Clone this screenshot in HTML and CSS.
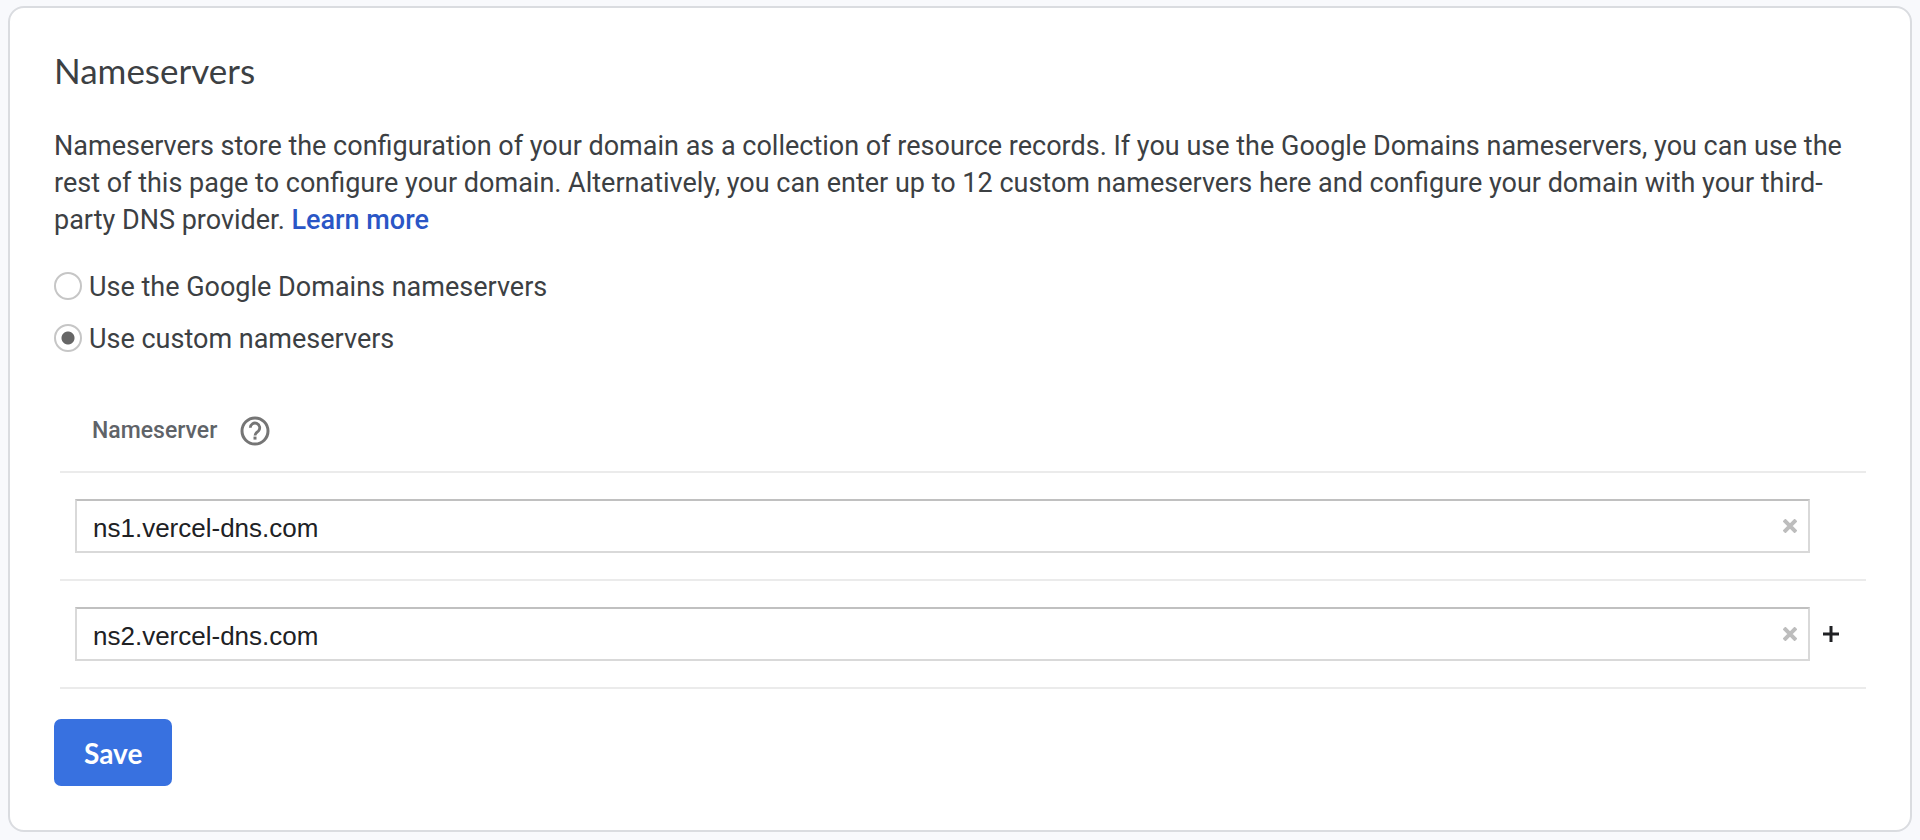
FILE: index.html
```
<!DOCTYPE html>
<html lang="en">
<head>
    <meta charset="UTF-8">
    <meta name="viewport" content="width=device-width, initial-scale=1.0">
    <title>Nameservers</title>
    <link rel="stylesheet" href="styles.css">
</head>
<body>
    <form class="card">
        <h1>Nameservers</h1>

        <p class="description">
            Nameservers store the configuration of your domain as a collection of resource records. If you use the Google Domains nameservers, you can use the rest of this page to configure your domain. Alternatively, you can enter up to 12 custom nameservers here and configure your domain with your third-party DNS provider. <a href="#">Learn more</a>
        </p>

        <div class="options">
            <label class="option">
                <input type="radio" name="mode" value="google">
                Use the Google Domains nameservers
            </label>
            <label class="option">
                <input type="radio" name="mode" value="custom" checked>
                Use custom nameservers
            </label>
        </div>

        <table class="servers">
            <thead>
                <tr>
                    <th colspan="2">
                        <div class="heading">
                            <span id="nsLabel">Nameserver</span>
                            <button type="button" class="icon-btn" aria-label="Help">
                                <svg width="30" height="30" viewBox="0 0 30 30" fill="none" stroke="#757575">
                                    <circle cx="15" cy="15" r="13" stroke-width="3"/>
                                    <path d="M10.3 11.8a4.7 4.7 0 1 1 8.1 3.2c-1.8 1.7-3.4 2.3-3.4 4.4" stroke-width="2.8"/>
                                    <path d="M15 20.6v3" stroke-width="3"/>
                                </svg>
                            </button>
                        </div>
                    </th>
                </tr>
            </thead>
            <tbody>
                <tr>
                    <td>
                        <div class="field">
                            <input type="text" value="ns1.vercel-dns.com" aria-labelledby="nsLabel">
                            <button type="button" class="icon-btn clear" aria-label="Clear">
                                <svg width="14" height="14" viewBox="0 0 14 14" stroke="#bdbdbd" stroke-width="4">
                                    <path d="M1 1l12 12M13 1L1 13"/>
                                </svg>
                            </button>
                        </div>
                    </td>
                    <td class="action"></td>
                </tr>
                <tr>
                    <td>
                        <div class="field">
                            <input type="text" value="ns2.vercel-dns.com" aria-labelledby="nsLabel">
                            <button type="button" class="icon-btn clear" aria-label="Clear">
                                <svg width="14" height="14" viewBox="0 0 14 14" stroke="#bdbdbd" stroke-width="4">
                                    <path d="M1 1l12 12M13 1L1 13"/>
                                </svg>
                            </button>
                        </div>
                    </td>
                    <td class="action">
                        <button type="button" class="icon-btn" aria-label="Add nameserver">
                            <svg width="16" height="16" viewBox="0 0 16 16" stroke="#202124" stroke-width="3">
                                <path d="M8 0v16M0 8h16"/>
                            </svg>
                        </button>
                    </td>
                </tr>
            </tbody>
        </table>

        <button type="submit" class="btn">Save</button>
    </form>
</body>
</html>
```

FILE: styles.css
```
body {
    font-family: Roboto, sans-serif;
    font-size: 27px;
    line-height: 37px;
    color: #3c4043;
    margin: 0;
    padding: 6px 8px;
    background-color: #f8f9fc;
}

.card {
    background: white;
    padding: 40px 44px 44px;
    border: 2px solid #dadce0;
    border-radius: 16px;
}

h1 {
    font-family: Lato, sans-serif;
    font-weight: normal;
    font-size: 35px;
    line-height: 44px;
    margin: 0 0 36px;
}

.description {
    margin: 0 0 30px;
}

a {
    color: #2a56c6;
    font-weight: 500;
    text-decoration: none;
}

.options {
    display: grid;
    gap: 15px;
}

.option {
    display: flex;
    align-items: center;
    gap: 7px;
}

.option input {
    appearance: none;
    width: 28px;
    height: 28px;
    margin: 0 0 4px;
    border: 2px solid #c6c6c6;
    border-radius: 50%;
    background: white;
}

.option input:checked {
    background: radial-gradient(circle, #666 6px, white 7px);
}

.servers {
    width: calc(100% - 6px);
    margin: 32px 0 30px 6px;
    border-collapse: collapse;
}

.servers tr {
    border-bottom: 2px solid #ebebeb;
}

.servers th {
    padding: 22px 32px;
    color: #5f6368;
    font-size: 23px;
    font-weight: 500;
}

.servers td {
    padding: 26px 0 26px 15px;
}

.servers .action {
    width: 43px;
    padding: 0 0 0 13px;
}

.heading {
    display: flex;
    align-items: center;
    gap: 23px;
}

.icon-btn {
    display: flex;
    padding: 0;
    border: none;
    background: none;
    cursor: pointer;
}

.field {
    display: flex;
    align-items: center;
    border: 2px solid #d9d9d9;
    border-top-color: #c0c0c0;
}

.field input {
    flex: 1;
    height: 50px;
    padding: 4px 16px 0;
    border: none;
    outline: none;
    box-sizing: border-box;
    color: #202124;
    font-family: "Liberation Sans", sans-serif;
    font-size: 26px;
}

.clear {
    padding-right: 11px;
}

.btn {
    height: 67px;
    padding: 0 30px;
    border: none;
    border-radius: 7px;
    background-color: #3871e0;
    color: white;
    font-family: Lato, sans-serif;
    font-size: 28px;
    font-weight: bold;
    cursor: pointer;
}
```
